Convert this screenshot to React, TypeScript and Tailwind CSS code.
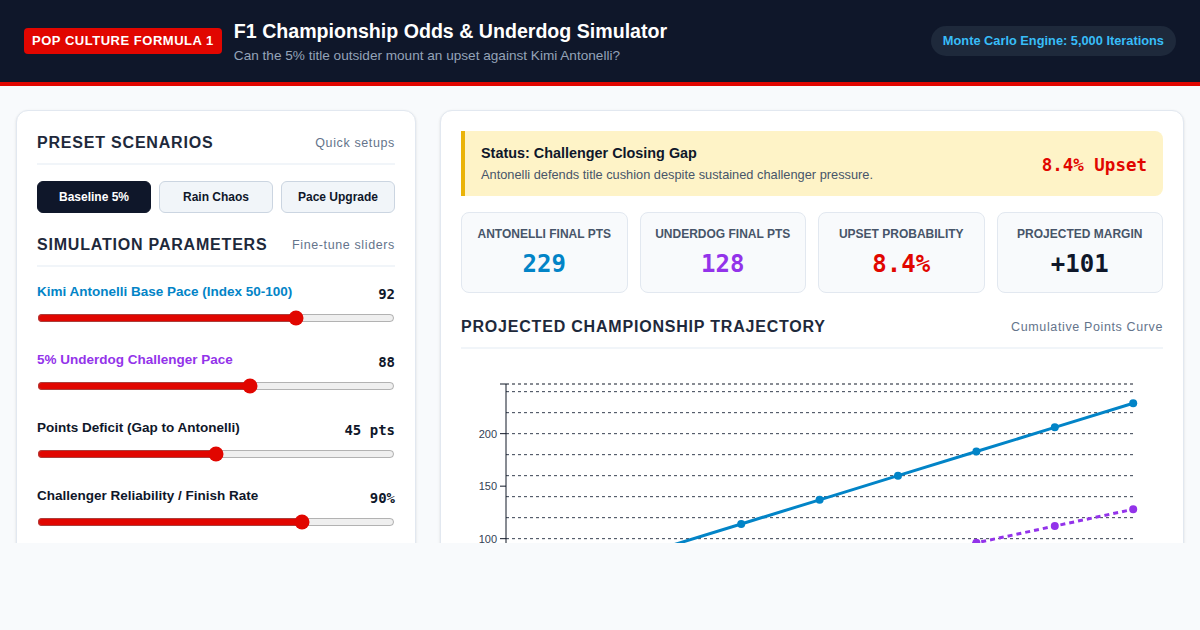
import React, { useState } from "react";

const presets = ["Baseline 5%", "Rain Chaos", "Pace Upgrade"];

const sliders = [
  { label: "Kimi Antonelli Base Pace (Index 50-100)", value: 92, min: 70, max: 100, unit: "", color: "text-[#0284c7]" },
  { label: "5% Underdog Challenger Pace", value: 88, min: 70, max: 100, unit: "", color: "text-[#9333ea]" },
  { label: "Points Deficit (Gap to Antonelli)", value: 45, min: 0, max: 90, unit: " pts", color: "text-[#0f172a]" },
  { label: "Challenger Reliability / Finish Rate", value: 90, min: 60, max: 100, unit: "%", color: "text-[#0f172a]" },
];

const stats = [
  { label: "Antonelli Final Pts", value: "229", color: "text-[#0284c7]" },
  { label: "Underdog Final Pts", value: "128", color: "text-[#9333ea]" },
  { label: "Upset Probability", value: "8.4%", color: "text-[#e10600]" },
  { label: "Projected Margin", value: "+101", color: "text-[#0f172a]" },
];

function SectionHead({ title, note }: { title: string; note: string }) {
  return (
    <div className="flex items-center justify-between border-b-2 border-[#f1f5f9] pb-2">
      <h2 className="text-base leading-6 font-bold tracking-wider text-[#1e293b]">{title}</h2>
      <span className="text-[12.5px] tracking-wider text-[#64748b]">{note}</span>
    </div>
  );
}

function Trajectory() {
  // chart coords: y-axis at x=45, top line at y=20, 1.05px per point
  const max = 247.3;
  const y = (v: number) => 20 + (max - v) * 1.05;
  const x = (i: number) => 45 + 78.4 * i;
  const rounds = Array.from({ length: 9 }, (_, i) => i);
  const antonelli = rounds.map((i) => 45 + 23 * i);
  const underdog = rounds.map((i) => 16 * i);
  const grid = [20, 40, 60, 80, 100, 120, 140, 160, 180, 200, 220, 240];
  const ticks = [0, 50, 100, 150, 200];

  const path = (vals: number[]) => vals.map((v, i) => `${i ? "L" : "M"}${x(i)},${y(v)}`).join(" ");

  return (
    <svg width="702" height="300" viewBox="0 0 702 300" className="block">
      {grid.map((g) => (
        <line key={g} x1={45} x2={672} y1={y(g)} y2={y(g)} stroke="#374151" strokeWidth={1} strokeDasharray="3 3" />
      ))}
      <line x1={45} x2={672} y1={20} y2={20} stroke="#111827" strokeWidth={1} strokeDasharray="3 3" />
      <line x1={45} x2={45} y1={20} y2={y(0)} stroke="#111827" strokeWidth={1} />
      <line x1={39} x2={45} y1={20} y2={20} stroke="#111827" strokeWidth={1} />
      {ticks.map((t) => (
        <g key={t}>
          <line x1={39} x2={45} y1={y(t)} y2={y(t)} stroke="#111827" strokeWidth={1} />
          <text x={36} y={y(t) + 4} textAnchor="end" fontSize="11" fill="#334155" fontFamily="Liberation Sans, Arial, sans-serif">
            {t}
          </text>
        </g>
      ))}
      <path d={path(underdog)} fill="none" stroke="#9333ea" strokeWidth={3} strokeDasharray="5 4" />
      {underdog.map((v, i) => (
        <circle key={i} cx={x(i)} cy={y(v)} r={4} fill="#9333ea" />
      ))}
      <path d={path(antonelli)} fill="none" stroke="#0284c7" strokeWidth={3} />
      {antonelli.map((v, i) => (
        <circle key={i} cx={x(i)} cy={y(v)} r={4} fill="#0284c7" />
      ))}
    </svg>
  );
}

export default function App() {
  const [preset, setPreset] = useState(0);
  const [values, setValues] = useState(sliders.map((s) => s.value));

  return (
    <div className="h-[630px] bg-[#f8fafc] font-['Liberation_Sans',Arial,sans-serif]">
      {/* HEADER */}
      <header className="h-[86px] bg-[#0f172a] border-b-4 border-[#e10600] px-6 flex items-center justify-between">
        <div className="flex items-center gap-3">
          <span className="bg-[#e10600] text-white text-[13px] font-bold tracking-[0.04em] px-2 py-[5px] rounded leading-4">
            POP CULTURE FORMULA 1
          </span>
          <div>
            <h1 className="text-white text-[19.6px] font-bold leading-7">F1 Championship Odds &amp; Underdog Simulator</h1>
            <p className="text-[#94a3b8] text-[13.6px] leading-5 mt-[1px]">
              Can the 5% title outsider mount an upset against Kimi Antonelli?
            </p>
          </div>
        </div>
        <div className="bg-[#1e293b] rounded-full px-3 h-[30px] flex items-center text-[12.8px] font-bold text-[#38bdf8]">
          Monte Carlo Engine: 5,000 Iterations
        </div>
      </header>

      {/* MAIN */}
      <div className="h-[457px] overflow-hidden px-4 pt-6 grid grid-cols-[400px_1fr] gap-6 items-start">
        {/* LEFT PANEL */}
        <section className="bg-white border border-[#e2e8f0] rounded-xl shadow-sm p-5 min-h-[520px]">
          <SectionHead title="PRESET SCENARIOS" note="Quick setups" />
          <div className="grid grid-cols-3 gap-2 mt-4">
            {presets.map((p, i) => (
              <button
                key={p}
                onClick={() => setPreset(i)}
                className={`h-8 rounded-md text-xs font-bold border ${
                  preset === i
                    ? "bg-[#0f172a] border-[#0f172a] text-white"
                    : "bg-[#f1f5f9] border-[#cbd5e1] text-[#0f172a]"
                }`}
              >
                {p}
              </button>
            ))}
          </div>

          <div className="mt-5">
            <SectionHead title="SIMULATION PARAMETERS" note="Fine-tune sliders" />
          </div>

          <div className="mt-[15px] space-y-6">
            {sliders.map((s, i) => (
              <div key={s.label}>
                <div className="flex items-center justify-between h-5">
                  <label className={`text-[13.5px] font-bold ${s.color}`}>{s.label}</label>
                  <span className="font-['DejaVu_Sans_Mono',monospace] text-[14px] font-bold text-[#0f172a] mt-[5px]">
                    {values[i]}
                    {s.unit}
                  </span>
                </div>
                <input
                  type="range"
                  min={s.min}
                  max={s.max}
                  value={values[i]}
                  onChange={(e) => {
                    const next = [...values];
                    next[i] = Number(e.target.value);
                    setValues(next);
                  }}
                  className="block w-full h-4 mt-2 accent-[#e10600]"
                />
              </div>
            ))}
          </div>
        </section>

        {/* RIGHT PANEL */}
        <section className="bg-white border border-[#e2e8f0] rounded-xl shadow-sm p-5 min-h-[520px]">
          <div className="h-[65px] bg-[#fef3c7] border-l-4 border-[#eab308] rounded-r-lg pl-4 pr-4 flex items-center justify-between">
            <div>
              <div className="text-[14.4px] font-bold text-[#0f172a] leading-5 mt-[1px]">Status: Challenger Closing Gap</div>
              <div className="text-[12.8px] text-[#475569] leading-5 mt-[2px]">
                Antonelli defends title cushion despite sustained challenger pressure.
              </div>
            </div>
            <div className="font-['DejaVu_Sans_Mono',monospace] text-[17.5px] font-bold text-[#e10600] mt-1">8.4% Upset</div>
          </div>

          <div className="grid grid-cols-4 gap-3 mt-4">
            {stats.map((s) => (
              <div key={s.label} className="bg-[#f8fafc] border border-[#e2e8f0] rounded-lg pt-[13px] pb-[13px] text-center">
                <div className="text-xs font-bold uppercase text-[#475569] leading-4">{s.label}</div>
                <div className={`font-['DejaVu_Sans_Mono',monospace] text-2xl font-bold leading-[30px] mt-[7px] ${s.color}`}>
                  {s.value}
                </div>
              </div>
            ))}
          </div>

          <div className="mt-[22px]">
            <SectionHead title="PROJECTED CHAMPIONSHIP TRAJECTORY" note="Cumulative Points Curve" />
          </div>

          <div className="mt-[15px]">
            <Trajectory />
          </div>
        </section>
      </div>
    </div>
  );
}
